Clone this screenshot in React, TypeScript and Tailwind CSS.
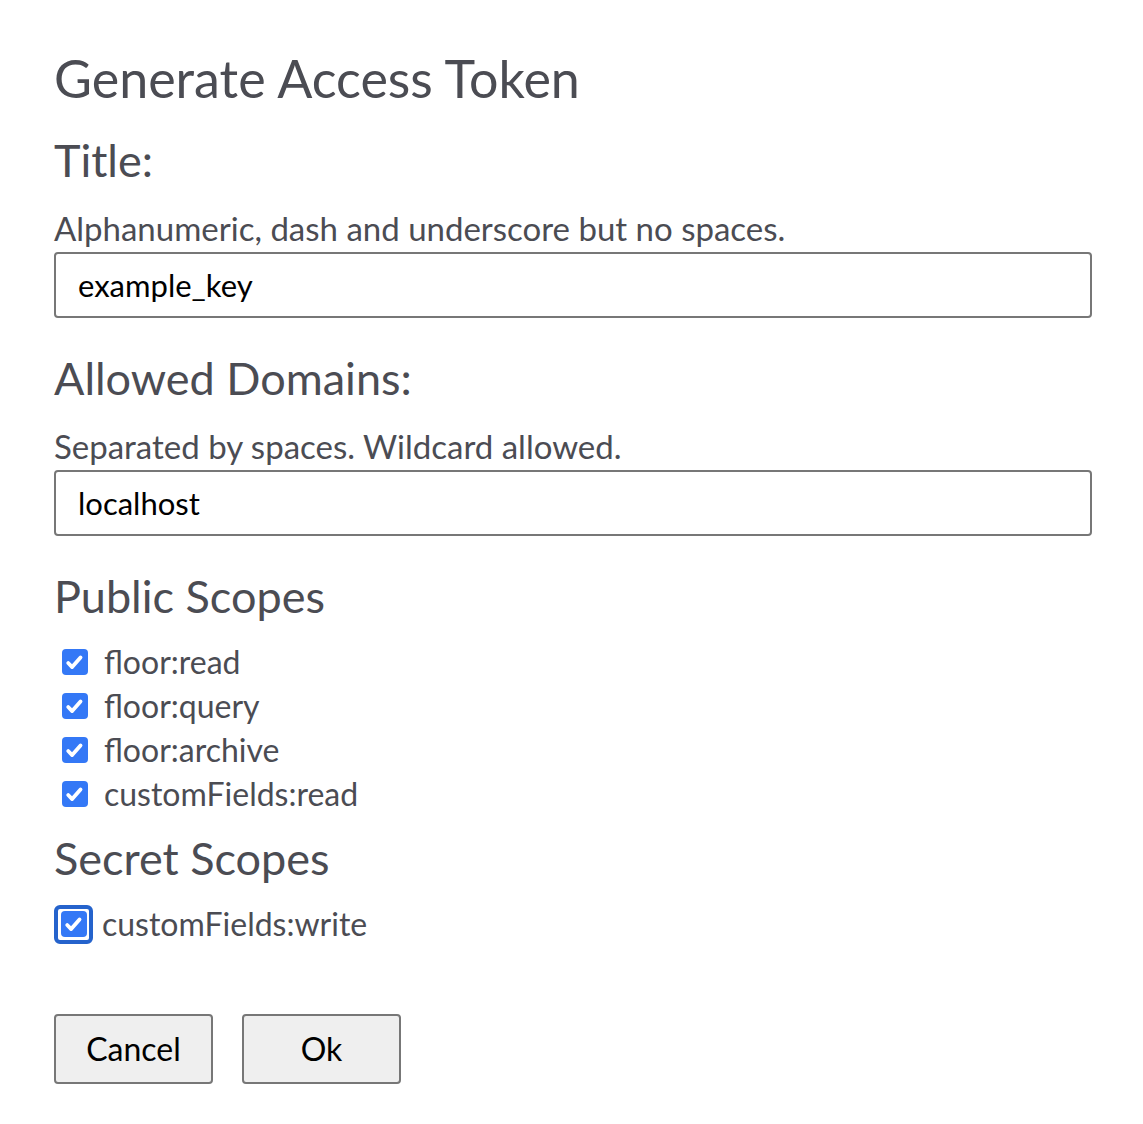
import React, { useState } from 'react';

const scopes = ['floor:read', 'floor:query', 'floor:archive', 'customFields:read'];

const Check: React.FC<{ focused?: boolean }> = ({ focused }) => (
  <span
    className={
      focused
        ? 'flex h-[39px] w-[39px] items-center justify-center rounded-[6px] border-[4px] border-[#2563cc]'
        : 'flex h-[39px] w-[39px] items-center justify-center'
    }
  >
    <span className="flex h-[26px] w-[26px] items-center justify-center rounded-[4px] bg-[#3478f6]">
      <svg viewBox="0 0 16 16" className="h-[21px] w-[21px]" fill="none">
        <path d="M3.2 8.4l3 3.1L12.6 4.2" stroke="white" strokeWidth="2.9" strokeLinecap="round" strokeLinejoin="round" />
      </svg>
    </span>
  </span>
);

const Field: React.FC<{ label: string; help: string; value: string; onChange: (v: string) => void }> = ({
  label,
  help,
  value,
  onChange,
}) => (
  <div className="mt-[34px]">
    <h2 className="text-[45px] leading-[52px]">{label}</h2>
    <p className="mt-[22px] text-[33px] leading-[40px]">{help}</p>
    <input
      value={value}
      onChange={(e) => onChange(e.target.value)}
      className="mt-[4px] block h-[66px] w-full rounded-[4px] border-2 border-[#777] px-[22px] text-[31px] text-black outline-none"
    />
  </div>
);

export default function App() {
  const [title, setTitle] = useState('example_key');
  const [domains, setDomains] = useState('localhost');

  return (
    <div
      className="min-h-[1124px] bg-white pl-[54px] pr-[51px] pt-[48px] text-[#4b4c53]"
      style={{ fontFamily: 'Lato, "Noto Sans", sans-serif' }}
    >
      <h1 className="text-[52px] leading-[60px]">Generate Access Token</h1>

      <div className="-mt-[8px]">
        <Field label="Title:" help="Alphanumeric, dash and underscore but no spaces." value={title} onChange={setTitle} />
      </div>
      <Field label="Allowed Domains:" help="Separated by spaces. Wildcard allowed." value={domains} onChange={setDomains} />

      <h2 className="mt-[34px] text-[45px] leading-[52px]">Public Scopes</h2>
      <div className="mt-[18px] flex flex-col">
        {scopes.map((s) => (
          <label key={s} className="flex h-[44px] items-center gap-[10px] pl-[1px]">
            <Check />
            <span className="text-[32px] leading-[40px]">{s}</span>
          </label>
        ))}
      </div>

      <h2 className="mt-[16px] text-[45px] leading-[52px]">Secret Scopes</h2>
      <label className="mt-[18px] flex h-[44px] items-center gap-[9px]">
        <Check focused />
        <span className="text-[32px] leading-[40px]">customFields:write</span>
      </label>

      <div className="mt-[68px] flex gap-[29px]">
        <button className="h-[70px] w-[159px] rounded-[4px] border-2 border-[#777] bg-[#efefef] text-[32px] text-black">
          Cancel
        </button>
        <button className="h-[70px] w-[159px] rounded-[4px] border-2 border-[#777] bg-[#efefef] text-[32px] text-black">
          Ok
        </button>
      </div>
    </div>
  );
}
